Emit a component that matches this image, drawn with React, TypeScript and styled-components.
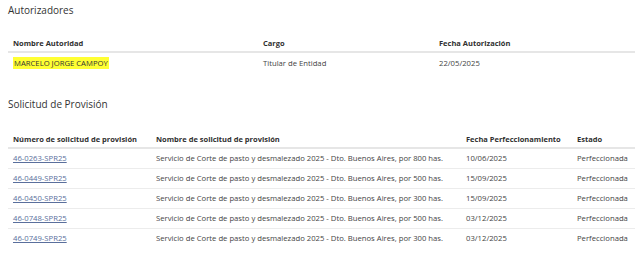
import { createGlobalStyle, styled } from 'styled-components';

const GlobalStyle = createGlobalStyle`
  html, body {
    margin: 0;
    padding: 0;
    background: #ffffff;
  }
  body {
    font-family: 'Open Sans', 'Liberation Sans', sans-serif;
    color: #444444;
  }
`;

const Root = styled.div`
  width: 640px;
  padding: 0 5px 0 8px;
  box-sizing: border-box;
  display: flex;
  flex-direction: column;
`;

const SectionTitle = styled.h2<{ $top: number }>`
  margin: ${(p) => p.$top}px 0 0 0;
  font-size: 10px;
  line-height: 16px;
  font-weight: 400;
  color: #333333;
`;

const Table = styled.table<{ $top: number }>`
  margin-top: ${(p) => p.$top}px;
  width: 627px;
  border-collapse: collapse;
  table-layout: fixed;
  font-size: 7.7px;

  & tbody tr:last-child > td {
    border-bottom: none;
  }
`;

const HeadCell = styled.th<{ $width: number }>`
  box-sizing: border-box;
  width: ${(p) => p.$width}px;
  text-align: left;
  font-weight: 700;
  font-size: 7.5px;
  color: #2f2f2f;
  padding: 0 0 0 5px;
  height: 17px;
  vertical-align: middle;
  border-bottom: 2px solid #e6e6e6;
  white-space: nowrap;
`;

const Cell = styled.td`
  box-sizing: border-box;
  padding: 0 0 0 5px;
  height: 20px;
  vertical-align: middle;
  border-bottom: 1px solid #ececec;
  white-space: nowrap;
  color: #444444;
`;

const Highlight = styled.span`
  background: #ffff33;
  color: #333333;
  padding: 1px 1px;
`;

const Link = styled.a`
  color: #5a6f9c;
  text-decoration: underline;
  cursor: pointer;
`;

const authorities = [
  { name: 'MARCELO JORGE CAMPOY', cargo: 'Titular de Entidad', fecha: '22/05/2025' },
];

const requests = [
  { id: '46-0263-SPR25', has: 800, fecha: '10/06/2025' },
  { id: '46-0449-SPR25', has: 500, fecha: '15/09/2025' },
  { id: '46-0450-SPR25', has: 300, fecha: '15/09/2025' },
  { id: '46-0748-SPR25', has: 500, fecha: '03/12/2025' },
  { id: '46-0749-SPR25', has: 300, fecha: '03/12/2025' },
];

export default function App() {
  return (
    <>
      <GlobalStyle />
      <Root>
        <SectionTitle $top={2}>Autorizadores</SectionTitle>
        <Table $top={17}>
          <thead>
            <tr>
              <HeadCell $width={250}>Nombre Autoridad</HeadCell>
              <HeadCell $width={176}>Cargo</HeadCell>
              <HeadCell $width={201}>Fecha Autorización</HeadCell>
            </tr>
          </thead>
          <tbody>
            {authorities.map((a) => (
              <tr key={a.name}>
                <Cell>
                  <Highlight>{a.name}</Highlight>
                </Cell>
                <Cell>{a.cargo}</Cell>
                <Cell>{a.fecha}</Cell>
              </tr>
            ))}
          </tbody>
        </Table>

        <SectionTitle $top={24}>Solicitud de Provisión</SectionTitle>
        <Table $top={19}>
          <thead>
            <tr>
              <HeadCell $width={143}>Número de solicitud de provisión</HeadCell>
              <HeadCell $width={310}>Nombre de solicitud de provisión</HeadCell>
              <HeadCell $width={111}>Fecha Perfeccionamiento</HeadCell>
              <HeadCell $width={63}>Estado</HeadCell>
            </tr>
          </thead>
          <tbody>
            {requests.map((r) => (
              <tr key={r.id}>
                <Cell>
                  <Link>{r.id}</Link>
                </Cell>
                <Cell>
                  Servicio de Corte de pasto y desmalezado 2025 - Dto. Buenos Aires, por {r.has} has.
                </Cell>
                <Cell>{r.fecha}</Cell>
                <Cell>Perfeccionada</Cell>
              </tr>
            ))}
          </tbody>
        </Table>
      </Root>
    </>
  );
}
